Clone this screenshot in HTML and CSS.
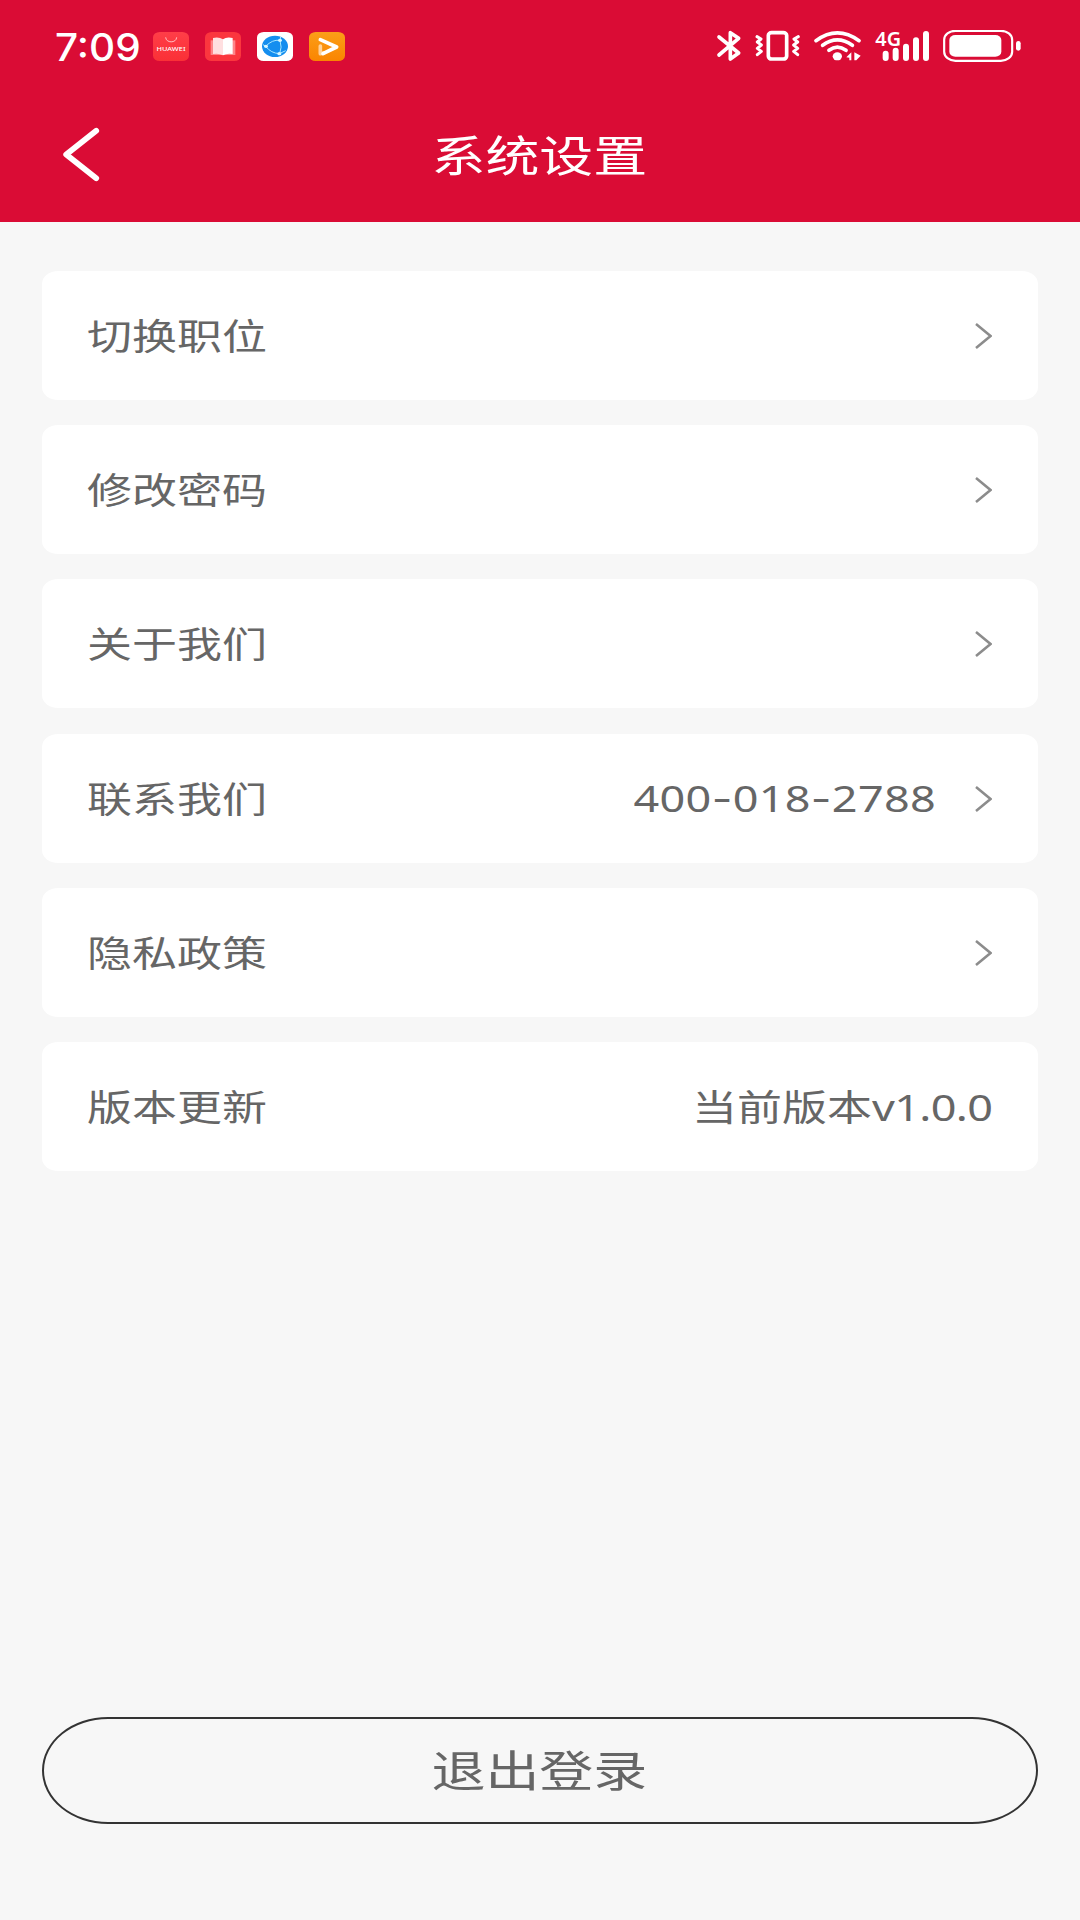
FILE: index.html
```html
<!DOCTYPE html>
<html lang="zh-CN">
<head>
<meta charset="utf-8">
<title>系统设置</title>
<link rel="stylesheet" href="styles.css">
</head>
<body>
<header class="header">
  <div class="status-bar">
    <div class="status-left">
      <div class="clock"><span class="wide">7:09</span></div>
      <div class="app-icons">
        <svg width="36" height="29" viewBox="0 0 108 87"><defs><linearGradient id="red" x2="0" y2="1"><stop stop-color="#ff3e48"/><stop offset="1" stop-color="#fa3036"/></linearGradient></defs><rect width="108" height="87" rx="20" ry="16" fill="url(#red)"/><path d="M38 16C39 34 70 34 71 16" fill="none" stroke="#ffd5d8" stroke-width="2.6"/><text x="54" y="57" text-anchor="middle" textLength="87" lengthAdjust="spacingAndGlyphs" class="brand">HUAWEI</text></svg>
        <svg width="36" height="29" viewBox="0 0 108 87"><rect width="108" height="87" rx="20" ry="16" fill="#fb363e"/><path d="M17 25H91V69H17Z" fill="#ff8589"/><path d="M24 18Q42 14 54 22V70Q42 63 24 66Z" fill="#ffdfe0"/><path d="M54 22Q64 14 83 18V66Q65 63 54 70Z" fill="#fff"/></svg>
        <svg width="36" height="29" viewBox="0 0 108 87"><rect width="108" height="87" rx="20" ry="16" fill="#fff"/><ellipse cx="54" cy="43" rx="39" ry="32" fill="#148eef"/><g fill="none" stroke="#a9e7ff" stroke-width="3"><path d="M26 43Q46 22 68 25M26 43Q42 64 68 65M69 25Q76 46 68 65M18 38L26 43M69 25L71 14M67 65L86 56"/></g><g fill="#d8f7ff"><ellipse cx="27" cy="43" rx="6" ry="5"/><ellipse cx="69" cy="25" rx="6" ry="5"/><ellipse cx="67" cy="65" rx="6" ry="5"/></g></svg>
        <svg width="36" height="29" viewBox="0 0 108 87"><defs><linearGradient id="orange" x2="0" y2="1"><stop stop-color="#fb9e18"/><stop offset="1" stop-color="#fa8500"/></linearGradient></defs><rect width="108" height="87" rx="20" ry="16" fill="url(#orange)"/><g fill="none" stroke-linecap="round" stroke-linejoin="round" stroke-width="11"><path d="M34 42V65L44 63" stroke="#ffd29a"/><path d="M34 23L83 45L42 65" stroke="#fff"/></g></svg>
      </div>
    </div>
    <div class="status-right">
      <svg width="26" height="32" viewBox="48 30 78 96"><path d="M57 51L116 99L91 117V38L116 55L57 105" fill="none" stroke="#fff" stroke-width="11" stroke-linecap="round" stroke-linejoin="round"/></svg>
      <svg width="47" height="32" viewBox="162 30 141 96"><g fill="none" stroke="#fff" stroke-linecap="round" stroke-linejoin="round"><rect x="205" y="38" width="55" height="79" rx="10" ry="8" stroke-width="11"/><path d="M171 50L183 57L172 66L184 75L172 85L184 94L172 104M295 50L282 57L293 66L281 75L293 85L281 94L293 104" stroke-width="9"/></g></svg>
      <svg width="49" height="32" viewBox="339 30 147 96"><g fill="none" stroke="#fff" stroke-width="11" stroke-linecap="round"><path d="M348 62Q412 15 477 62M368 76Q412 43 457 76M387 91Q412 72 438 91"/></g><ellipse cx="412" cy="109" rx="14" ry="12" fill="#fff"/><path d="M439 112L454 97V121H448V113ZM463 97L482 107L469 121H463Z" fill="#fff"/></svg>
      <svg class="signal" width="56" height="32" viewBox="522 30 168 96"><text x="526" y="77" textLength="77" lengthAdjust="spacingAndGlyphs" class="network">4G</text><path d="M557 101V114M587 92V114M618 80V114M648 61V114M678 42V114" fill="none" stroke="#fff" stroke-width="18" stroke-linecap="round"/></svg>
      <svg width="80" height="32" viewBox="726 30 240 96"><rect x="732.5" y="32.500" width="204" height="90" rx="34" ry="27" fill="none" stroke="#fff" stroke-width="6.5"/><rect x="748" y="45" width="156" height="65" rx="18" ry="15" fill="#fff"/><rect x="948" y="63" width="14" height="29" rx="7" fill="#fff"/></svg>
    </div>
  </div>
  <div class="title-bar">
    <svg class="back" width="40" height="56" viewBox="0 0 40 56"><path d="M36.200 4.800L6.200 28.500L36.200 52.200" fill="none" stroke="#fff" stroke-width="5.800" stroke-linecap="round" stroke-linejoin="round"/></svg>
    <h1 class="title"><span class="wide center">系统设置</span></h1>
  </div>
</header>
<main class="content">
  <ul class="settings">
    <li class="row"><span class="label wide">切换职位</span><svg class="arrow" width="17" height="26" viewBox="0 0 17 26"><path d="M1 1L15.500 13L1 25"/></svg></li>
    <li class="row"><span class="label wide">修改密码</span><svg class="arrow" width="17" height="26" viewBox="0 0 17 26"><path d="M1 1L15.500 13L1 25"/></svg></li>
    <li class="row"><span class="label wide">关于我们</span><svg class="arrow" width="17" height="26" viewBox="0 0 17 26"><path d="M1 1L15.500 13L1 25"/></svg></li>
    <li class="row"><span class="label wide">联系我们</span><span class="phone wide right number">400<span class="dash">-</span>018<span class="dash">-</span>2788</span><svg class="arrow" width="17" height="26" viewBox="0 0 17 26"><path d="M1 1L15.500 13L1 25"/></svg></li>
    <li class="row"><span class="label wide">隐私政策</span><svg class="arrow" width="17" height="26" viewBox="0 0 17 26"><path d="M1 1L15.500 13L1 25"/></svg></li>
    <li class="row"><span class="label wide">版本更新</span><span class="version wide right">当前版本<span class="number">v1.0.0</span></span></li>
  </ul>
  <button class="logout" type="button"><span class="wide center">退出登录</span></button>
</main>
</body>
</html>
```
FILE: styles.css
```css
* { box-sizing: border-box; }

body {
  margin: 0;
  height: 1920px;
  display: flex;
  flex-direction: column;
  background: #f7f7f7;
  color: #666;
  font-family: "Noto Sans CJK SC", sans-serif;
  font-size: 36px;
}

svg { display: block; flex: none; }

/* Expanded lettering used throughout the interface */
.wide {
  display: inline-block;
  transform: scaleX(1.25);
  transform-origin: left center;
  white-space: nowrap;
}
.center { transform-origin: center; }
.right { transform-origin: right center; }

.header {
  height: 222px;
  background: #da0c35;
  color: #fff;
}

.status-bar {
  height: 92px;
  padding: 0 58px 0 55px;
  display: flex;
  justify-content: space-between;
  align-items: center;
}
.status-left { display: flex; align-items: center; }
.clock {
  width: 98px;
  padding-top: 3px;
  font: 500 37.500px/40px Inter, sans-serif;
}
.clock .wide { transform: scaleX(1.08); }
.app-icons { display: flex; gap: 16px; }
.status-right { display: flex; gap: 12px; }
.brand { font: 500 18px "Noto Sans", sans-serif; fill: #fff; }
.signal { overflow: visible; }
.network { font: 600 58px "Noto Sans", sans-serif; fill: #fff; }

.title-bar {
  height: 124px;
  padding: 0 60px;
  display: grid;
  grid-template-columns: 40px 1fr 40px;
  align-items: center;
}
.title {
  margin: 0 2px 0 0;
  padding-bottom: 3px;
  text-align: center;
  font-size: 43.200px;
  line-height: 60px;
  font-weight: 400;
}

.content {
  flex: 1;
  padding: 48.500px 42px 96px;
  display: flex;
  flex-direction: column;
  justify-content: space-between;
}
.settings {
  margin: 0;
  padding: 0;
  list-style: none;
  display: grid;
  gap: 25.400px;
}
.row {
  height: 129px;
  padding: 0 46px 0 45px;
  display: flex;
  align-items: center;
  justify-content: space-between;
  border-radius: 16px / 13px;
  background: #fff;
  line-height: 54px;
}
.label { padding-bottom: 3px; }
.phone {
  margin-left: auto;
  margin-right: 39px;
  padding-top: 2px;
  letter-spacing: 0.250px;
}
.number {
  font-family: "Noto Sans", sans-serif;
}
.dash { font-family: Inter, sans-serif; }
.version .number { letter-spacing: -0.500px; }
.arrow {
  margin-top: 1px;
  fill: none;
  stroke: #8c8c8c;
  stroke-width: 2.500;
}

.logout {
  height: 107px;
  padding: 0 2px 5px 0;
  border: 2px solid #333;
  border-radius: 66px / 53.500px;
  background: transparent;
  color: #666;
  font-family: inherit;
  font-size: 43.200px;
  line-height: 60px;
}
```
